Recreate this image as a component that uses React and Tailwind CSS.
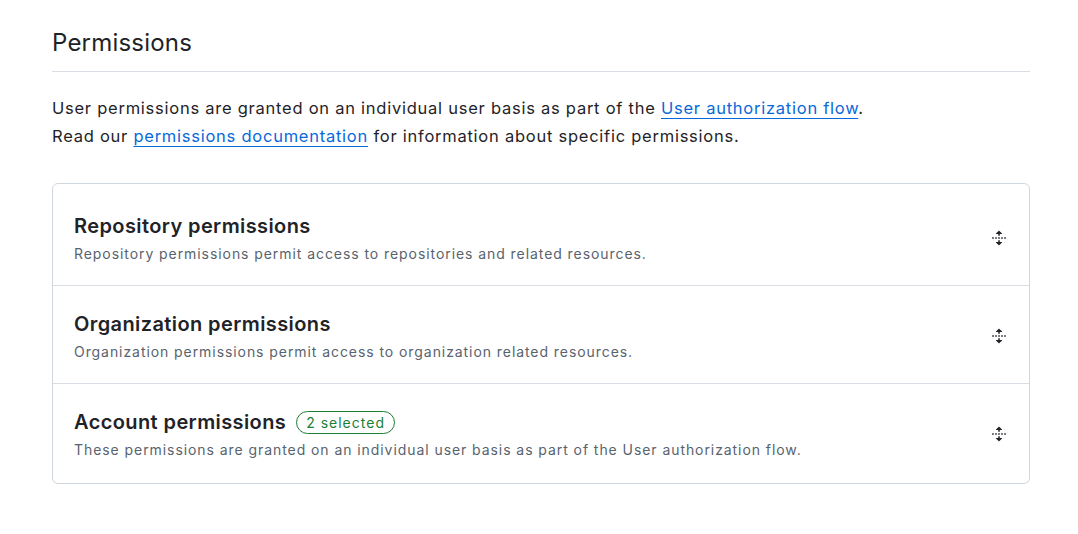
import React from "react";

const UnfoldIcon = () => (
  <svg viewBox="0 0 16 16" width="16" height="16" fill="currentColor" aria-hidden="true">
    <path d="m8.177.677 2.896 2.896a.25.25 0 0 1-.177.427H8.75v1.25a.75.75 0 0 1-1.5 0V4H5.104a.25.25 0 0 1-.177-.427L7.823.677a.25.25 0 0 1 .354 0ZM7.25 10.75a.75.75 0 0 1 1.5 0V12h2.146a.25.25 0 0 1 .177.427l-2.896 2.896a.25.25 0 0 1-.354 0l-2.896-2.896A.25.25 0 0 1 5.104 12H7.25v-1.25Zm-5-2a.75.75 0 0 0 0-1.5h-.5a.75.75 0 0 0 0 1.5h.5ZM6 8a.75.75 0 0 1-.75.75h-.5a.75.75 0 0 1 0-1.5h.5A.75.75 0 0 1 6 8Zm2.25.75a.75.75 0 0 0 0-1.5h-.5a.75.75 0 0 0 0 1.5h.5ZM12 8a.75.75 0 0 1-.75.75h-.5a.75.75 0 0 1 0-1.5h.5A.75.75 0 0 1 12 8Zm2.25.75a.75.75 0 0 0 0-1.5h-.5a.75.75 0 0 0 0 1.5h.5Z" />
  </svg>
);

const sections = [
  {
    title: "Repository permissions",
    desc: "Repository permissions permit access to repositories and related resources.",
  },
  {
    title: "Organization permissions",
    desc: "Organization permissions permit access to organization related resources.",
  },
  {
    title: "Account permissions",
    desc: "These permissions are granted on an individual user basis as part of the User authorization flow.",
    badge: "2 selected",
  },
];

export default function App() {
  return (
    <div className="min-h-screen bg-white text-[#1f2328] font-['Inter',sans-serif]">
      <div className="px-[52px] pt-[27px] w-[1082px]">
        <h2 className="text-[24px] font-normal leading-[32px] tracking-[0.2px] pb-[12px] border-b border-[#d8dee4]">
          Permissions
        </h2>

        <p className="mt-[22px] text-[16.5px] leading-[28px] tracking-[0.75px]">
          User permissions are granted on an individual user basis as part of the{" "}
          <a href="#" className="text-[#0969da] underline underline-offset-[4px]">
            User authorization flow
          </a>
          .
          <br />
          Read our{" "}
          <a href="#" className="text-[#0969da] underline underline-offset-[4px]">
            permissions documentation
          </a>{" "}
          for information about specific permissions.
        </p>

        <div className="mt-[33px] border border-[#d0d7de] rounded-[6px] pt-[3px] pb-[2px]">
          {sections.map((s, i) => (
            <div
              key={s.title}
              className={
                "flex items-center justify-between px-[21px] pt-[3px] h-[98px] " +
                (i > 0 ? "border-t border-[#d8dee4]" : "")
              }
            >
              <div>
                <div className="flex items-center gap-[10px]">
                  <h3 className="text-[20px] font-semibold leading-[28px] tracking-[0.4px]">{s.title}</h3>
                  {s.badge && (
                    <span className="border border-[#1a7f37] text-[#1a7f37] rounded-full px-[9px] text-[14px] leading-[21px] tracking-[1px]">
                      {s.badge}
                    </span>
                  )}
                </div>
                <p className="text-[14px] leading-[20px] tracking-[0.93px] text-[#59636e] mt-[4px]">{s.desc}</p>
              </div>
              <div className="text-[#1f2328] mr-[1px]">
                <UnfoldIcon />
              </div>
            </div>
          ))}
        </div>
      </div>
    </div>
  );
}
